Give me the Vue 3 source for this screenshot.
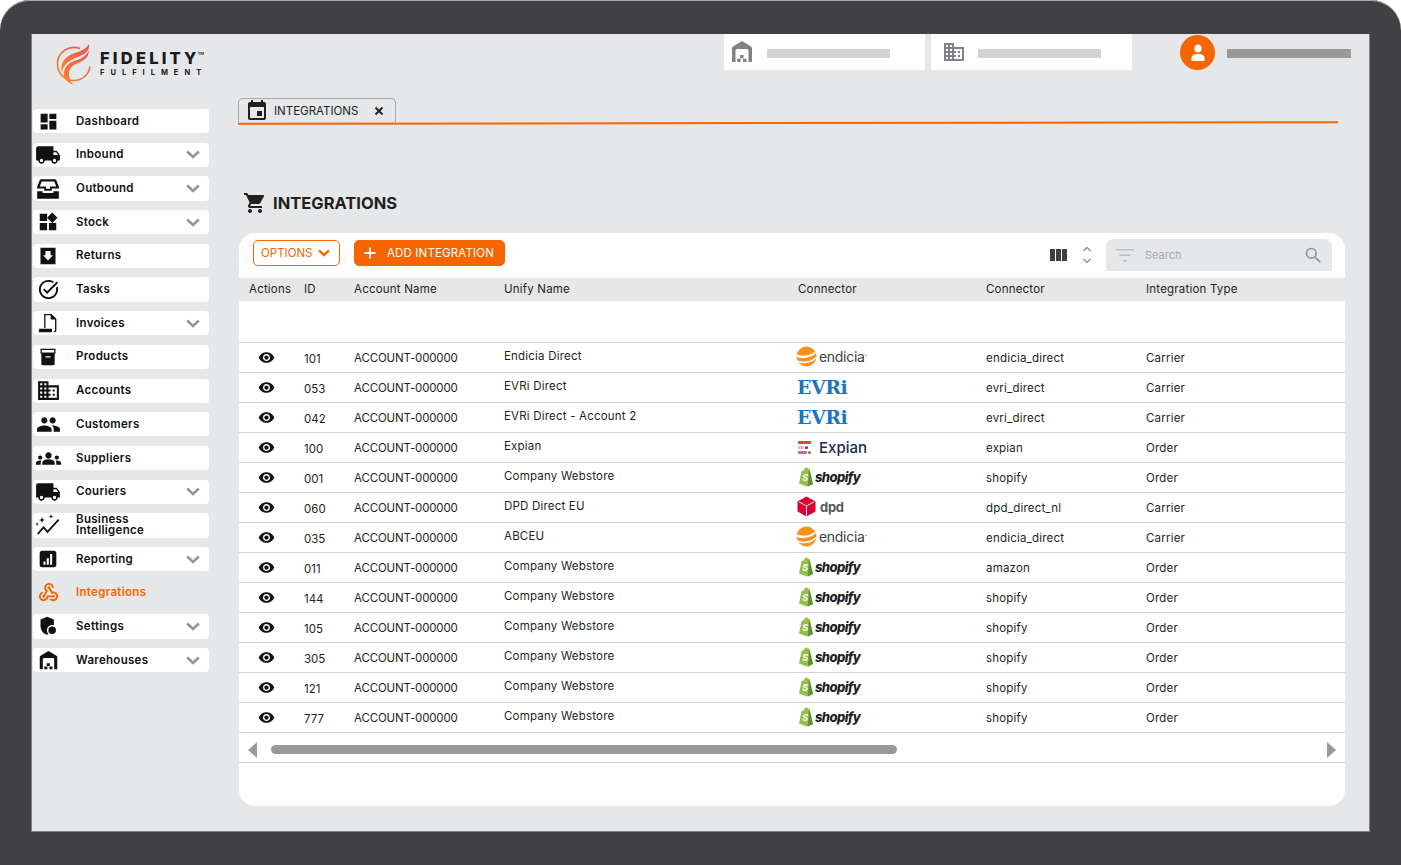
<script setup>
const icons = {
  dashboard: 'M3 13h8V3H3v10zm0 8h8v-6H3v6zm10 0h8V11h-8v10zm0-18v6h8V3h-8z',
  truck: 'M20 8h-3V4H3c-1.1 0-2 .9-2 2v11h2c0 1.66 1.34 3 3 3s3-1.34 3-3h6c0 1.66 1.34 3 3 3s3-1.34 3-3h2v-5l-3-4zM6 18.5c-.83 0-1.5-.67-1.5-1.5s.67-1.5 1.5-1.5 1.5.67 1.5 1.5-.67 1.5-1.5 1.5zm13.5-9l1.96 2.5H17V9.5h2.5zm-1.5 9c-.83 0-1.5-.67-1.5-1.5s.67-1.5 1.5-1.5 1.5.67 1.5 1.5-.67 1.5-1.5 1.5z',
  tray: 'M6 3h12a2 2 0 0 1 1.8 1.2L22 10v1.5h-6.5v2h-7v-2H2V10l2.2-5.8A2 2 0 0 1 6 3zm.2 2L4.4 9.8h5.8v2h3.6v-2h5.8L17.8 5H6.200zM2 14h5v1.8h10V14h5v7H2v-7z',
  widgets: 'M13 13v8h8v-8h-8zM3 21h8v-8H3v8zM3 3v8h8V3H3zm13.66-1.31L11 7.34 16.66 13l5.66-5.66-5.66-5.65z',
  returns: 'M3 2h18v20H3V2zm6 4v5H6l6 6.500 6-6.500h-3V6H9z',
  tasks: 'M22 5.18L10.59 16.6l-4.24-4.24 1.41-1.41 2.83 2.83 10-10L22 5.18zm-2.21 5.04c.13.57.21 1.17.21 1.78 0 4.42-3.58 8-8 8s-8-3.58-8-8 3.58-8 8-8c1.58 0 3.04.46 4.28 1.25l1.44-1.44C16.1 2.67 14.13 2 12 2 6.48 2 2 6.48 2 12s4.48 10 10 10 10-4.48 10-10c0-1.19-.22-2.33-.6-3.39l-1.61 1.61z',
  invoice: 'M7 1h8.500L21 6.500V20a2 2 0 0 1-2 2h-1v-1.500h1a.5.5 0 0 0 .5-.5V7.500H14.500v-5H8.500V17H7V1zM1 18h15v3.500a.5.5 0 0 1-.5.5H1v-1.200c0-1 .3-1.800 0-2.800z',
  box: 'M3 2h18v6h-1v12a2 2 0 0 1-2 2H6a2 2 0 0 1-2-2V8H3V2zm1.500 1.500v3h15v-3h-15zM9 11v1.500h6V11H9z',
  domain: 'M12 7V3H2v18h20V7H12zM6 19H4v-2h2v2zm0-4H4v-2h2v2zm0-4H4V9h2v2zm0-4H4V5h2v2zm4 12H8v-2h2v2zm0-4H8v-2h2v2zm0-4H8V9h2v2zm0-4H8V5h2v2zm10 12h-8v-2h2v-2h-2v-2h2v-2h-2V9h8v10zm-2-8h-2v2h2v-2zm0 4h-2v2h2v-2z',
  people: 'M16 11c1.66 0 2.99-1.34 2.99-3S17.66 5 16 5c-1.66 0-3 1.34-3 3s1.34 3 3 3zm-8 0c1.66 0 2.99-1.34 2.99-3S9.66 5 8 5C6.34 5 5 6.34 5 8s1.34 3 3 3zm0 2c-2.33 0-7 1.17-7 3.5V19h14v-2.5c0-2.33-4.67-3.5-7-3.5zm8 0c-.29 0-.62.02-.97.05 1.16.84 1.97 1.97 1.97 3.45V19h6v-2.5c0-2.33-4.67-3.5-7-3.5z',
  groups: 'M12 12.75c1.63 0 3.07.39 4.24.9 1.08.48 1.76 1.56 1.76 2.73V18H6v-1.61c0-1.18.68-2.26 1.76-2.73 1.17-.52 2.61-.91 4.24-.91zM4 13c1.1 0 2-.9 2-2s-.9-2-2-2-2 .9-2 2 .9 2 2 2zm1.13 1.1c-.37-.06-.74-.1-1.13-.1-.99 0-1.93.21-2.78.58C.48 14.9 0 15.62 0 16.43V18h4.500v-1.61c0-.83.23-1.61.63-2.29zM20 13c1.1 0 2-.9 2-2s-.9-2-2-2-2 .9-2 2 .9 2 2 2zm4 3.43c0-.81-.48-1.53-1.22-1.85-.85-.37-1.79-.58-2.78-.58-.39 0-.76.04-1.13.1.4.68.63 1.46.63 2.29V18H24v-1.57zM12 6c1.66 0 3 1.34 3 3s-1.34 3-3 3-3-1.34-3-3 1.34-3 3-3z',
  graph: 'M1 20.500l6.500-7.500 4 4.500L22 6l1.300 1.200L11.500 20.200l-4-4.500-5 5.800zM6 4l.8 2.200L9 7l-2.200.8L6 10l-.8-2.200L3 7l2.200-.8zM1 9l.5 1.500L3 11l-1.500.5L1 13l-.5-1.500L-1 11l1.500-.5zM15 1l.6 1.900 1.900.6-1.900.6L15 6l-.6-1.900-1.900-.6 1.900-.6z',
  chart: 'M5 2h14a3 3 0 0 1 3 3v14a3 3 0 0 1-3 3H5a3 3 0 0 1-3-3V5a3 3 0 0 1 3-3zm1.500 13v4H9v-4H6.500zm4-4v8H13v-8h-2.500zm4-5v13H17V6h-2.500z',
  webhook: 'M10 15h5.880c.27-.31.67-.5 1.120-.5.83 0 1.500.67 1.500 1.500s-.67 1.500-1.500 1.500c-.44 0-.84-.19-1.120-.5H11.900c-.46 2.280-2.480 4-4.900 4-2.760 0-5-2.240-5-5 0-2.420 1.720-4.440 4-4.900v2.070c-1.160.41-2 1.530-2 2.830 0 1.650 1.350 3 3 3s3-1.350 3-3v-1zm2.500-11c1.650 0 3 1.350 3 3h2c0-2.760-2.240-5-5-5s-5 2.240-5 5c0 1.430.6 2.710 1.550 3.620l-2.350 3.900c-.68.14-1.200.75-1.200 1.480 0 .83.67 1.500 1.500 1.500s1.500-.67 1.500-1.500c0-.16-.02-.31-.07-.45l3.380-5.630C10.490 9.610 9.500 8.420 9.500 7c0-1.650 1.350-3 3-3zm4.500 9c-.64 0-1.230.2-1.720.54l-3.050-5.070C11.530 8.350 11 7.740 11 7c0-.83.67-1.500 1.500-1.500S14 6.170 14 7c0 .15-.02.29-.06.43l2.190 3.650c.28-.05.57-.08.87-.08 2.760 0 5 2.240 5 5s-2.240 5-5 5c-1.850 0-3.470-1.010-4.330-2.500h2.670c.48.32 1.050.5 1.660.5 1.650 0 3-1.350 3-3s-1.350-3-3-3z',
  shield: 'M11 1l8 3.200V11c-.6-.2-1.300-.3-2-.3-3.500 0-6.300 2.800-6.300 6.300 0 1.900.8 3.500 2.100 4.700-.6.300-1.200.5-1.800.7C5.500 21 3 16.500 3 11V4.200L11 1zm6 11.500a4.500 4.500 0 1 1 0 9 4.500 4.500 0 0 1 0-9z',
  warehouse: 'M12 1l9 5.500a2 2 0 0 1 1 1.700V22h-3.500V10.500a1.500 1.500 0 0 0-1.500-1.500H7a1.500 1.500 0 0 0-1.500 1.500V22H2V8.200a2 2 0 0 1 1-1.700L12 1zm-2 14h3.500v3.200H10V15zm-2.800 3.800h3.500V22H7.200v-3.200zm5.800 0h3.500V22H13v-3.200z'
}

const navItems = [
  { label: 'Dashboard', icon: 'dashboard', w: 21 },
  { label: 'Inbound', icon: 'truck', w: 26, arrow: true },
  { label: 'Outbound', icon: 'tray', w: 26, arrow: true },
  { label: 'Stock', icon: 'widgets', w: 22, arrow: true },
  { label: 'Returns', icon: 'returns', w: 20 },
  { label: 'Tasks', icon: 'tasks', w: 23 },
  { label: 'Invoices', icon: 'invoice', w: 21, arrow: true },
  { label: 'Products', icon: 'box', w: 20 },
  { label: 'Accounts', icon: 'domain', w: 25 },
  { label: 'Customers', icon: 'people', w: 25 },
  { label: 'Suppliers', icon: 'groups', w: 25 },
  { label: 'Couriers', icon: 'truck', w: 26, arrow: true },
  { label: 'Business Intelligence', icon: 'graph', w: 24, two: true },
  { label: 'Reporting', icon: 'chart', w: 20, arrow: true },
  { label: 'Integrations', icon: 'webhook', w: 23, active: true },
  { label: 'Settings', icon: 'shield', w: 20, arrow: true },
  { label: 'Warehouses', icon: 'warehouse', w: 21, arrow: true }
]

const columns = ['Actions', 'ID', 'Account Name', 'Unify Name', 'Connector', 'Connector', 'Integration Type']

const rows = [
  { id: '101', unify: 'Endicia Direct', logo: 'endicia', connector: 'endicia_direct', type: 'Carrier' },
  { id: '053', unify: 'EVRi Direct', logo: 'evri', connector: 'evri_direct', type: 'Carrier' },
  { id: '042', unify: 'EVRi Direct - Account 2', logo: 'evri', connector: 'evri_direct', type: 'Carrier' },
  { id: '100', unify: 'Expian', logo: 'expian', connector: 'expian', type: 'Order' },
  { id: '001', unify: 'Company Webstore', logo: 'shopify', connector: 'shopify', type: 'Order' },
  { id: '060', unify: 'DPD Direct EU', logo: 'dpd', connector: 'dpd_direct_nl', type: 'Carrier' },
  { id: '035', unify: 'ABCEU', logo: 'endicia', connector: 'endicia_direct', type: 'Carrier' },
  { id: '011', unify: 'Company Webstore', logo: 'shopify', connector: 'amazon', type: 'Order' },
  { id: '144', unify: 'Company Webstore', logo: 'shopify', connector: 'shopify', type: 'Order' },
  { id: '105', unify: 'Company Webstore', logo: 'shopify', connector: 'shopify', type: 'Order' },
  { id: '305', unify: 'Company Webstore', logo: 'shopify', connector: 'shopify', type: 'Order' },
  { id: '121', unify: 'Company Webstore', logo: 'shopify', connector: 'shopify', type: 'Order' },
  { id: '777', unify: 'Company Webstore', logo: 'shopify', connector: 'shopify', type: 'Order' }
]
</script>

<template>
  <div class="frame">
    <div class="screen">
      <aside class="sidebar">
        <div class="brand">
          <svg class="flame" width="36" height="42" viewBox="0 0 36 42">
            <defs>
              <linearGradient id="flameFill" x1="0" y1="1" x2="1" y2="0">
                <stop offset="0" stop-color="#f7862a" />
                <stop offset="1" stop-color="#ee4f5c" />
              </linearGradient>
            </defs>
            <path d="M24 5.500C13 1.500 1.500 9 1.500 21c0 9.500 7.500 16.500 16.500 16.500 8 0 15-6 16-14" fill="none" stroke="url(#flameFill)" stroke-width="1.600" />
            <path d="M33 1c1 7-4 10-11 13C13 17.500 7 21 6 30 3 19 10 13 19 10c6-2 11-4 14-9z" fill="url(#flameFill)" />
            <path d="M33 7c0 8-6 11-13 14-7 3-9 9-5 18 1 1 3 3 6 3-10-1-14-7-13-13 1-7 7-10 13-12 6-2 10-5 12-10z" fill="url(#flameFill)" />
          </svg>
          <div class="brand-text">
            <div class="brand-name">FIDELITY<sup>TM</sup></div>
            <div class="brand-sub">FULFILMENT</div>
          </div>
        </div>
        <nav class="nav">
          <div
            v-for="item in navItems"
            :key="item.label"
            class="nav-item"
            :class="{ active: item.active, two: item.two }"
          >
            <span class="nav-icon">
              <svg :width="item.w" :height="item.w" viewBox="0 0 24 24" fill="currentColor"><path :d="icons[item.icon]" fill-rule="evenodd" /></svg>
            </span>
            <span class="nav-label">{{ item.label }}</span>
            <svg v-if="item.arrow" class="nav-arrow" width="14" height="9" viewBox="0 0 14 9" fill="none">
              <path d="M1.200 1.500L7 7l5.800-5.500" stroke="#939598" stroke-width="2.600" />
            </svg>
          </div>
        </nav>
      </aside>

      <main class="main">
        <div class="topbar">
          <div class="top-box">
            <svg width="24" height="24" viewBox="0 0 24 24" fill="#808285"><path :d="icons.warehouse" fill-rule="evenodd" /></svg>
            <span class="bar"></span>
          </div>
          <div class="top-box second">
            <svg width="24" height="24" viewBox="0 0 24 24" fill="#808285"><path :d="icons.domain" /></svg>
            <span class="bar"></span>
          </div>
          <div class="user">
            <span class="avatar">
              <svg width="20" height="22" viewBox="0 0 20 22" fill="#fff">
                <ellipse cx="10" cy="6.500" rx="3.600" ry="4" />
                <path d="M3.500 19v-3c0-2.500 2.500-4 6.500-4s6.500 1.500 6.500 4v3z" />
              </svg>
            </span>
            <span class="bar dark"></span>
          </div>
        </div>

        <div class="tabs">
          <div class="tab">
            <svg width="24" height="24" viewBox="0 0 24 24" fill="#231f20"><path d="M19 3h-1V1h-2v2H8V1H6v2H5c-1.110 0-1.990.9-1.990 2L3 19c0 1.100.89 2 2 2h14c1.100 0 2-.9 2-2V5c0-1.100-.9-2-2-2zm0 16H5V8h14v11zm-2-7h-5v5h5v-5z" /></svg>
            <span class="tab-label">INTEGRATIONS</span>
            <svg class="tab-close" width="10" height="10" viewBox="0 0 10 10" fill="none"><path d="M1.500 1.500l7 7m0-7l-7 7" stroke="#231f20" stroke-width="1.900" /></svg>
          </div>
          <div class="tab-line"></div>
        </div>

        <h1 class="title">
          <svg width="24" height="24" viewBox="0 0 24 24" fill="#231f20"><path d="M7 18c-1.100 0-1.990.9-1.990 2S5.900 22 7 22s2-.9 2-2-.9-2-2-2zM1 2v2h2l3.600 7.590-1.350 2.450c-.16.28-.25.61-.25.96 0 1.100.9 2 2 2h12v-2H7.420c-.14 0-.25-.11-.25-.25l.03-.12.9-1.630h7.450c.75 0 1.410-.41 1.750-1.030l3.580-6.490c.08-.14.12-.31.12-.48 0-.55-.45-1-1-1H5.210l-.94-2H1zm16 16c-1.100 0-1.990.9-1.990 2s.89 2 1.990 2 2-.9 2-2-.9-2-2-2z" /></svg>
          <span>INTEGRATIONS</span>
        </h1>

        <section class="card">
          <div class="toolbar">
            <button class="btn-options">
              OPTIONS
              <svg width="12" height="8" viewBox="0 0 12 8" fill="none"><path d="M1 1.300L6 6l5-4.700" stroke="#f56600" stroke-width="2.400" /></svg>
            </button>
            <button class="btn-add">
              <svg width="12" height="12" viewBox="0 0 12 12" fill="none"><path d="M6 0.500v11M0.500 6h11" stroke="#fff" stroke-width="1.800" /></svg>
              ADD INTEGRATION
            </button>
            <div class="tools">
              <svg width="17" height="12" viewBox="0 0 17 12" fill="#414042"><path d="M0 0h5v12H0zM6 0h5v12H6zM12 0h5v12h-5z" /></svg>
              <svg class="sorter" width="10" height="18" viewBox="0 0 10 18" fill="none" stroke="#808285" stroke-width="1.100"><path d="M1.500 5L5 1.500 8.500 5M1.500 13L5 16.500 8.500 13" /></svg>
              <div class="search">
                <svg width="18" height="13" viewBox="0 0 18 13" fill="#bcbec0"><path d="M0 0h18v1.600H0zM3.500 5.500h11v1.600h-11zM7 11h4v1.600H7z" /></svg>
                <span class="search-text">Search</span>
                <svg class="search-icon" width="16" height="16" viewBox="0 0 16 16" fill="none" stroke="#939598" stroke-width="1.700"><circle cx="6.300" cy="6.300" r="4.800" /><path d="M9.800 9.800l5.400 5.400" /></svg>
              </div>
            </div>
          </div>

          <div class="row head">
            <span v-for="(col, i) in columns" :key="i">{{ col }}</span>
          </div>
          <div class="blank"></div>

          <div v-for="row in rows" :key="row.id" class="row body">
            <span>
              <svg class="eye" width="17" height="17" viewBox="0 0 24 24" fill="#111"><path d="M12 4.500C7 4.500 2.730 7.610 1 12c1.730 4.390 6 7.500 11 7.500s9.270-3.110 11-7.500c-1.730-4.390-6-7.500-11-7.500zM12 17c-2.760 0-5-2.240-5-5s2.240-5 5-5 5 2.240 5 5-2.240 5-5 5zm0-8c-1.660 0-3 1.340-3 3s1.340 3 3 3 3-1.340 3-3-1.340-3-3-3z" /></svg>
            </span>
            <span class="cell-id">{{ row.id }}</span>
            <span class="cell-account">ACCOUNT-000000</span>
            <span class="cell-unify">{{ row.unify }}</span>

            <span v-if="row.logo === 'endicia'" class="logo logo-endicia">
              <svg width="21" height="21" viewBox="0 0 21 21">
                <circle cx="10.500" cy="10.500" r="10" fill="#f5921e" />
                <path d="M0.500 8C5 11 14 10 19.500 5.500l.7 1.500C15 12 5 13.500 0.500 10.500zM1 14c5 3 14 2 19.500-3.500l-.3 2C15 17.500 6 18.500 2 16z" fill="#fff" />
              </svg>
              <span>endicia<sup>.</sup></span>
            </span>
            <span v-else-if="row.logo === 'evri'" class="logo logo-evri">EVRi</span>
            <span v-else-if="row.logo === 'expian'" class="logo logo-expian">
              <svg width="14" height="14" viewBox="0 0 14 14">
                <rect x="0" y="0" width="13" height="3" rx="1" fill="#d9443f" />
                <rect x="0" y="5" width="6" height="3" rx="1" fill="#e8b7c9" />
                <rect x="7" y="5.500" width="3" height="2.400" fill="#4a4f8a" />
                <rect x="0" y="10" width="9" height="3" rx="1" fill="#c764ad" />
                <circle cx="11.500" cy="11.500" r="1.600" fill="#5a8f3c" />
              </svg>
              <span>Expian</span>
            </span>
            <span v-else-if="row.logo === 'shopify'" class="logo logo-shopify">
              <svg width="15" height="20" viewBox="0 0 15 20">
                <path d="M1 16.500L3.500 4.500C4 3.800 5 3.500 5.800 3.200 6.300 1.500 7.400.5 8.500.5c.7 0 1.200.5 1.500 1.200l1-.2 1 2.300L15 17l-6 2.500z" fill="#95bf47" />
                <path d="M11 1.500L15 17l-5 2.500z" fill="#5e8e3e" />
                <text x="4.200" y="14" font-size="9" font-weight="700" font-family="Inter, sans-serif" fill="#fff">S</text>
              </svg>
              <span>shopify</span>
            </span>
            <span v-else class="logo logo-dpd">
              <svg width="19" height="21" viewBox="0 0 19 21">
                <path d="M9.500 0.500L18.500 5.500v10L9.500 20.500 0.500 15.500v-10z" fill="#dc0032" />
                <path d="M2 5.800l7.500 4.200 7.500-4.200M9.500 10v10" stroke="#fff" stroke-width="1" fill="none" />
              </svg>
              <span>dpd</span>
            </span>

            <span>{{ row.connector }}</span>
            <span>{{ row.type }}</span>
          </div>

          <div class="scroller">
            <span class="arrow left"></span>
            <span class="thumb"></span>
            <span class="arrow right"></span>
          </div>
        </section>
      </main>
    </div>
  </div>
</template>

<style>
html, body {
  margin: 0;
  background: #fff;
}
</style>

<style scoped>
.frame {
  box-sizing: border-box;
  width: 1401px;
  height: 865px;
  padding: 34px 31px 33px;
  background: #414042;
  border-radius: 30px 30px 0 0;
  box-shadow: inset 0 1px 0 #a7a9ac;
  font-family: Inter, "Liberation Sans", sans-serif;
  color: #231f20;
}

.screen {
  display: flex;
  height: 798px;
  background: #e6e7e8;
  box-shadow: inset 1px 0 0 #808285, inset -1px 0 0 #808285, inset 0 -1px 0 #808285;
}

.sidebar {
  box-sizing: border-box;
  flex: 0 0 208px;
  padding-left: 2px;
}

.brand {
  display: flex;
  align-items: flex-start;
  gap: 8px;
  height: 75px;
  padding: 9px 0 0 23px;
  box-sizing: border-box;
}

.brand-text {
  margin-top: 8px;
}

.brand-name {
  font-size: 16.500px;
  font-weight: 800;
  line-height: 15px;
  letter-spacing: 3.200px;
  color: #1a1a1a;
  white-space: nowrap;
}

.brand-name sup {
  margin-left: -2px;
  font-size: 4px;
  font-weight: 600;
  letter-spacing: 0;
  vertical-align: 9px;
  line-height: 0;
}

.brand-sub {
  margin-top: 2px;
  font-size: 7.500px;
  font-weight: 700;
  line-height: 10px;
  letter-spacing: 6px;
  color: #1a1a1a;
  white-space: nowrap;
}

.nav {
  display: flex;
  flex-direction: column;
  gap: 9.400px;
  width: 176px;
}

.nav-item {
  display: flex;
  align-items: center;
  height: 24.300px;
  background: #fff;
  border-radius: 4px;
  color: #111;
}

.nav-item.active {
  background: transparent;
  color: #f56600;
}

.nav-icon {
  display: flex;
  justify-content: center;
  flex: 0 0 30px;
  margin-right: 13px;
}

.nav-label {
  font-size: 11.500px;
  font-weight: 600;
  line-height: 11px;
  letter-spacing: 0.300px;
  color: inherit;
}

.nav-item.two .nav-label {
  width: 80px;
}

.nav-arrow {
  margin-left: auto;
  margin-right: 9px;
}

.main {
  flex: 1;
  min-width: 0;
}

.topbar {
  display: flex;
  align-items: center;
  gap: 6px;
  height: 36px;
  padding-left: 485px;
}

.top-box {
  display: flex;
  align-items: center;
  gap: 13px;
  box-sizing: border-box;
  width: 201px;
  height: 36px;
  padding-left: 6px;
  background: #fff;
}

.top-box.second {
  gap: 12px;
  padding-left: 11px;
}

.bar {
  width: 123px;
  height: 9px;
  margin-top: 2px;
  background: #d1d3d4;
}

.bar.dark {
  width: 124px;
  background: #999;
}

.user {
  display: flex;
  align-items: center;
  gap: 12px;
  margin-left: 42px;
}

.avatar {
  display: flex;
  align-items: center;
  justify-content: center;
  width: 35px;
  height: 35px;
  margin-top: 1px;
  border-radius: 50%;
  background: #f56600;
}

.tabs {
  margin: 28px 32px 0 -1px;
}

.tab {
  display: flex;
  align-items: center;
  box-sizing: border-box;
  width: 158px;
  height: 24px;
  padding: 0 11px 0 6px;
  border: 1px solid #a7a9ac;
  border-bottom: 0;
  border-radius: 5px 5px 0 0;
}

.tab-label {
  margin-left: 5px;
  font-size: 11.500px;
  color: #231f20;
}

.tab-close {
  margin-left: auto;
}

.tab-line {
  height: 2px;
  background: #f56600;
  transform: rotate(-0.08deg);
}

.title {
  display: flex;
  align-items: center;
  gap: 6px;
  height: 24px;
  margin: 67px 0 0 4px;
  font-size: 16.500px;
  font-weight: 700;
  color: #231f20;
}

.card {
  box-sizing: border-box;
  width: 1106px;
  height: 573px;
  margin-top: 18px;
  background: #fff;
  border-radius: 16px;
}

.toolbar {
  display: flex;
  align-items: center;
  gap: 14px;
  height: 45px;
  padding: 0 13px 5px 14px;
  box-sizing: border-box;
}

.btn-options,
.btn-add {
  display: flex;
  align-items: center;
  box-sizing: border-box;
  height: 26px;
  border: 1px solid #f56600;
  border-radius: 5px;
  font-family: inherit;
  font-size: 11.500px;
  cursor: pointer;
}

.btn-options {
  gap: 5px;
  width: 87px;
  padding: 0 0 0 7px;
  background: #fff;
  color: #f56600;
}

.btn-add {
  gap: 11px;
  width: 151px;
  padding: 0 0 0 9px;
  letter-spacing: 0.150px;
  background: #f56600;
  color: #fff;
}

.tools {
  display: flex;
  align-items: center;
  margin-top: 4px;
  margin-left: auto;
}

.sorter {
  margin: 0 14px 0 15px;
}

.search {
  display: flex;
  align-items: center;
  box-sizing: border-box;
  width: 226px;
  height: 32px;
  padding: 0 11px 0 10px;
  background: #e6e7e8;
  border-radius: 8px 8px 0 0;
}

.search-text {
  margin-left: 11px;
  font-size: 11px;
  color: #a7a9ac;
}

.search-icon {
  margin-left: auto;
}

.row {
  display: grid;
  grid-template-columns: 55px 50px 150px 294px 188px 160px 1fr;
  align-items: center;
  padding-left: 10px;
  font-size: 11.500px;
  letter-spacing: 0.200px;
  color: #231f20;
}

.head {
  box-sizing: border-box;
  height: 23px;
  padding-bottom: 2px;
  background: #e6e7e8;
}

.blank {
  height: 41px;
}

.body {
  box-sizing: border-box;
  height: 30px;
  border-top: 1px solid #d1d3d4;
}

.cell-id {
  padding-top: 2px;
  letter-spacing: 0;
}

.cell-account {
  letter-spacing: -0.150px;
}

.cell-unify {
  padding-bottom: 4px;
}

.eye {
  display: block;
  margin-left: 9px;
}

.logo {
  display: flex;
  align-items: center;
  padding-bottom: 2px;
  white-space: nowrap;
  letter-spacing: 0;
}

.logo-endicia {
  gap: 2px;
  margin-left: -2px;
  font-size: 14px;
  letter-spacing: -0.300px;
  color: #414042;
}

.logo-endicia sup {
  font-size: 10px;
  line-height: 0;
}

.logo-evri {
  margin-left: -1px;
  font-family: "DejaVu Serif", serif;
  font-size: 19px;
  font-weight: 700;
  letter-spacing: -0.500px;
  color: #1b75bc;
}

.logo-expian {
  gap: 7px;
  padding-bottom: 0;
  font-size: 15px;
  font-weight: 500;
  color: #1c2a52;
}

.logo-shopify {
  gap: 2px;
  font-size: 13px;
  font-weight: 800;
  font-style: italic;
  letter-spacing: -0.600px;
  color: #1f1f1f;
}

.logo-dpd {
  gap: 4px;
  margin-left: -1px;
  font-size: 13px;
  font-weight: 700;
  letter-spacing: -0.300px;
  color: #58595b;
}

.scroller {
  display: flex;
  align-items: center;
  box-sizing: border-box;
  height: 31px;
  padding: 4px 9px 0;
  border-top: 1px solid #d1d3d4;
  border-bottom: 1px solid #d1d3d4;
}

.arrow {
  width: 0;
  height: 0;
  border-top: 8px solid transparent;
  border-bottom: 8px solid transparent;
}

.arrow.left {
  border-right: 9px solid #999;
}

.arrow.right {
  margin-left: auto;
  border-left: 9px solid #999;
}

.thumb {
  width: 626px;
  height: 9px;
  margin-left: 14px;
  background: #999;
  border-radius: 5px;
}
</style>
